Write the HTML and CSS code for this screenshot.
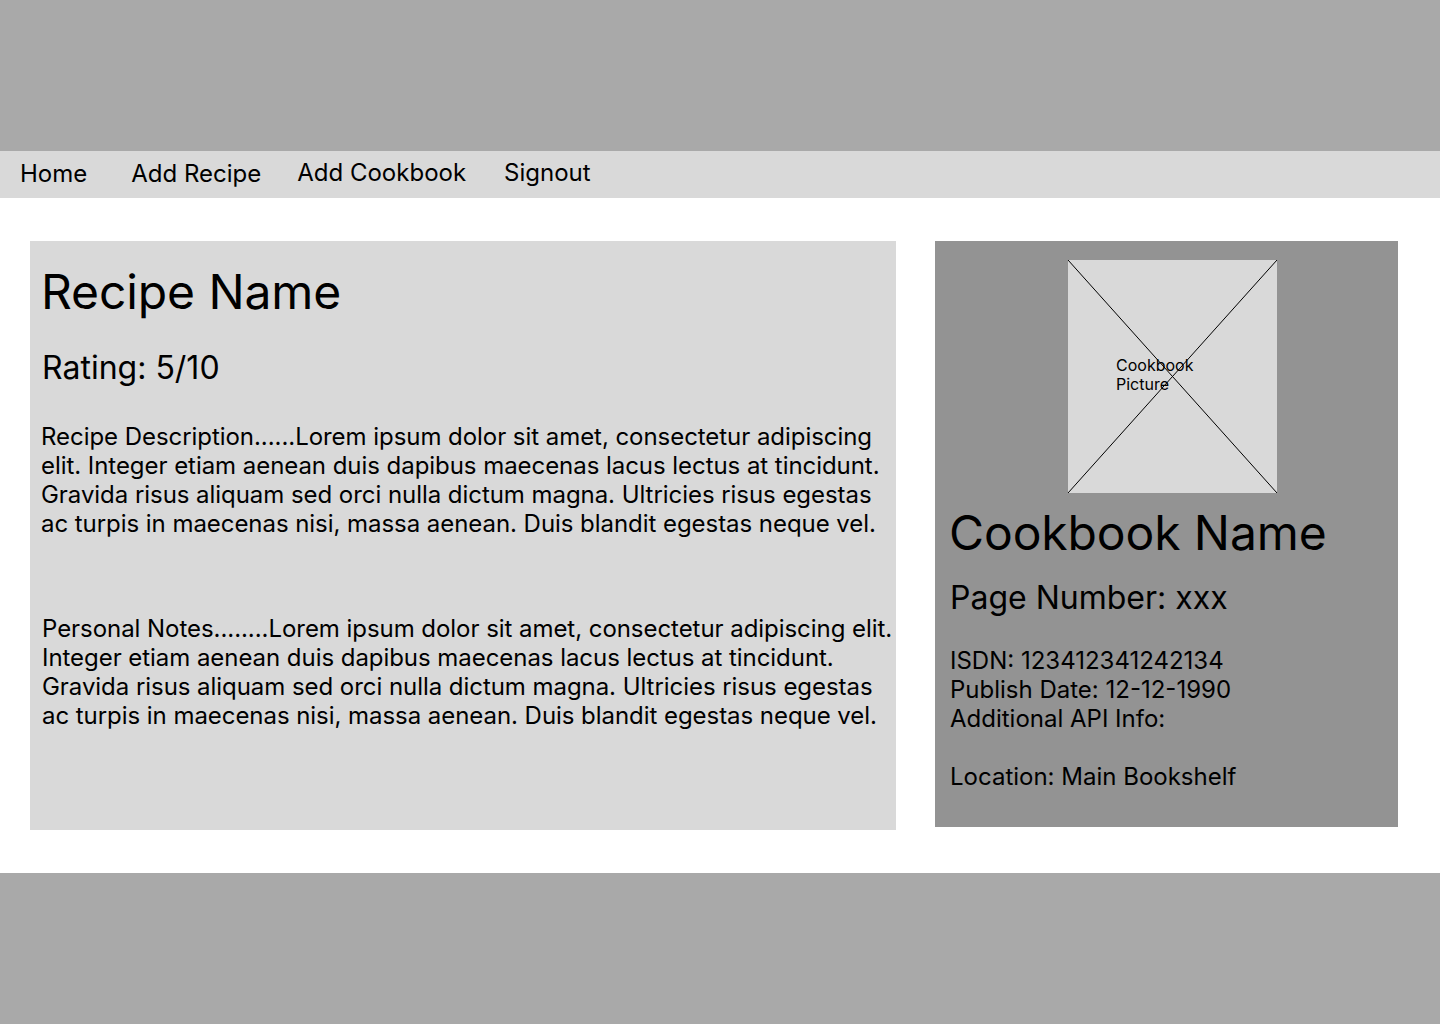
FILE: index.html
```html
<!DOCTYPE html>
<html>
<head>
<meta charset="utf-8">
<link rel="stylesheet" href="styles.css">
</head>
<body>
<header class="top"></header>
<nav class="nav">
  <a class="nav-item home">Home</a>
  <a class="nav-item low">Add Recipe</a>
  <a class="nav-item">Add Cookbook</a>
  <a class="nav-item last">Signout</a>
</nav>
<main class="main">
  <section class="recipe">
    <h1 class="recipe-title">Recipe Name</h1>
    <p class="rating">Rating: 5/10</p>
    <p class="desc">Recipe Description......Lorem ipsum dolor sit amet, consectetur adipiscing elit. Integer etiam aenean duis dapibus maecenas lacus lectus at tincidunt. Gravida risus aliquam sed orci nulla dictum magna. Ultricies risus egestas ac turpis in maecenas nisi, massa aenean. Duis blandit egestas neque vel.</p>
    <p class="notes">Personal Notes........Lorem ipsum dolor sit amet, consectetur adipiscing elit. Integer etiam aenean duis dapibus maecenas lacus lectus at tincidunt. Gravida risus aliquam sed orci nulla dictum magna. Ultricies risus egestas ac turpis in maecenas nisi, massa aenean. Duis blandit egestas neque vel.</p>
  </section>
  <aside class="cookbook">
    <div class="picture">
      <svg class="cross" viewBox="0 0 209 233" preserveAspectRatio="none">
        <line x1="0" y1="0" x2="209" y2="233" stroke="#000" stroke-width="1"/>
        <line x1="209" y1="0" x2="0" y2="233" stroke="#000" stroke-width="1"/>
      </svg>
      <span class="picture-label">Cookbook<br>Picture</span>
    </div>
    <h2 class="cookbook-title">Cookbook Name</h2>
    <p class="page">Page Number: xxx</p>
    <p class="info">ISDN: 123412341242134<br>Publish Date: 12-12-1990<br>Additional API Info:<br><br>Location: Main Bookshelf</p>
  </aside>
</main>
<footer class="bottom"></footer>
</body>
</html>
```
FILE: styles.css
```css
* { box-sizing: border-box; }
html, body { margin: 0; padding: 0; }
body {
  font-family: Inter, "Noto Sans", sans-serif;
  color: #000;
  background: #fff;
  width: 1440px;
  height: 1024px;
  overflow: hidden;
}
.top { height: 151px; background: #a9a9a9; }
.nav {
  height: 47px;
  background: #d9d9d9;
  display: flex;
  align-items: flex-start;
  padding-left: 20px;
  gap: 36px;
}
.nav-item {
  font-size: 24px;
  line-height: 29px;
  margin-top: 7px;
  color: #000;
}
.nav-item.low { margin-top: 8px; }
.nav-item.home { margin-top: 8px; margin-right: 8px; }
.nav-item.last { margin-left: 2px; }
.main {
  height: 675px;
  display: flex;
  align-items: flex-start;
  padding: 43px 0 0 30px;
  gap: 39px;
}
.recipe {
  width: 866px;
  height: 589px;
  background: #d9d9d9;
  padding: 22px 0 0 11px;
}
.recipe-title {
  margin: 0;
  font-size: 48px;
  font-weight: 400;
  line-height: 58px;
  letter-spacing: -0.1px;
}
.rating {
  margin: 27px 0 0 1px;
  font-size: 32px;
  line-height: 39px;
}
.desc {
  margin: 35px 0 0 0;
  width: 850px;
  font-size: 24px;
  line-height: 29px;
  letter-spacing: -0.05px;
}
.notes {
  margin: 76px 0 0 1px;
  width: 856px;
  font-size: 24px;
  line-height: 29px;
  letter-spacing: -0.05px;
}
.cookbook {
  width: 463px;
  height: 586px;
  background: #939393;
  padding: 19px 0 0 15px;
}
.picture {
  position: relative;
  width: 209px;
  height: 233px;
  margin-left: 118px;
  background: #d9d9d9;
}
.cross { position: absolute; inset: 0; width: 100%; height: 100%; }
.picture-label {
  position: absolute;
  left: 48px;
  top: 96px;
  font-size: 16px;
  line-height: 19px;
}
.cookbook-title {
  margin: 11px 0 0 -1px;
  font-size: 48px;
  font-weight: 400;
  line-height: 58px;
  letter-spacing: -0.1px;
}
.page {
  margin: 16px 0 0 0;
  font-size: 32px;
  line-height: 39px;
}
.info {
  margin: 29px 0 0 0;
  font-size: 24px;
  line-height: 29px;
}
.bottom { height: 151px; background: #a9a9a9; }
```
